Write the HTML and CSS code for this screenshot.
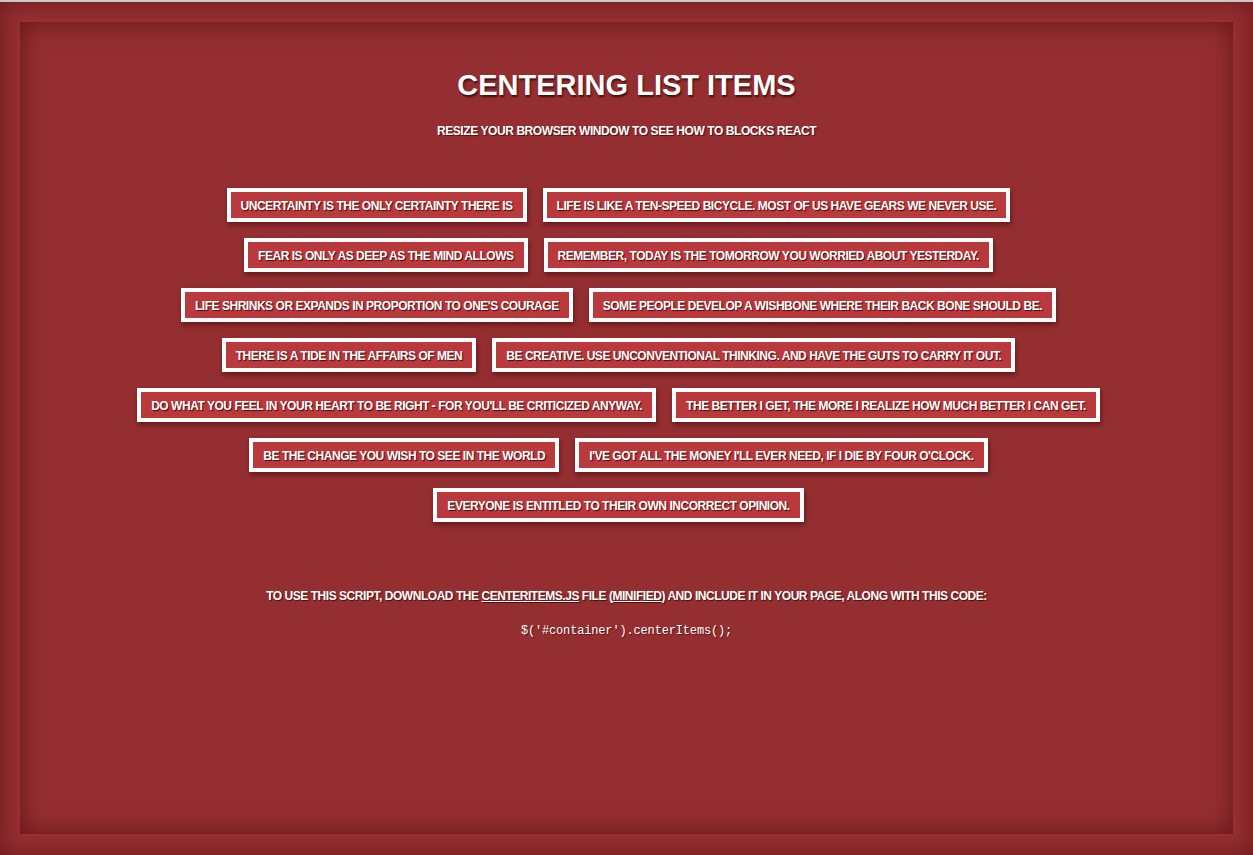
FILE: index.html
```html
<!DOCTYPE html>
<html>
<head>
<meta charset="utf-8">
<title>Centering List Items</title>
<link rel="stylesheet" href="styles.css">
</head>
<body>
<div class="page">
  <div class="container">
    <h1 class="title">CENTERING LIST ITEMS</h1>
    <p class="subtitle">RESIZE YOUR BROWSER WINDOW TO SEE HOW TO BLOCKS REACT</p>
    <ul class="list">
      <li class="row"><span class="item">UNCERTAINTY IS THE ONLY CERTAINTY THERE IS</span><span class="item">LIFE IS LIKE A TEN-SPEED BICYCLE. MOST OF US HAVE GEARS WE NEVER USE.</span></li>
      <li class="row"><span class="item">FEAR IS ONLY AS DEEP AS THE MIND ALLOWS</span><span class="item">REMEMBER, TODAY IS THE TOMORROW YOU WORRIED ABOUT YESTERDAY.</span></li>
      <li class="row"><span class="item">LIFE SHRINKS OR EXPANDS IN PROPORTION TO ONE'S COURAGE</span><span class="item">SOME PEOPLE DEVELOP A WISHBONE WHERE THEIR BACK BONE SHOULD BE.</span></li>
      <li class="row"><span class="item">THERE IS A TIDE IN THE AFFAIRS OF MEN</span><span class="item">BE CREATIVE. USE UNCONVENTIONAL THINKING. AND HAVE THE GUTS TO CARRY IT OUT.</span></li>
      <li class="row"><span class="item">DO WHAT YOU FEEL IN YOUR HEART TO BE RIGHT - FOR YOU'LL BE CRITICIZED ANYWAY.</span><span class="item">THE BETTER I GET, THE MORE I REALIZE HOW MUCH BETTER I CAN GET.</span></li>
      <li class="row"><span class="item">BE THE CHANGE YOU WISH TO SEE IN THE WORLD</span><span class="item">I'VE GOT ALL THE MONEY I'LL EVER NEED, IF I DIE BY FOUR O'CLOCK.</span></li>
      <li class="row"><span class="item">EVERYONE IS ENTITLED TO THEIR OWN INCORRECT OPINION.</span></li>
    </ul>
    <p class="note">TO USE THIS SCRIPT, DOWNLOAD THE <a href="#">CENTERITEMS.JS</a> FILE (<a href="#">MINIFIED</a>) AND INCLUDE IT IN YOUR PAGE, ALONG WITH THIS CODE:</p>
    <pre class="code">$('#container').centerItems();</pre>
  </div>
</div>
</body>
</html>
```

FILE: styles.css
```css
html, body {
  margin: 0;
  padding: 0;
}
body {
  background: #952e31;
  font-family: "Liberation Sans", Arial, sans-serif;
  color: #fff;
}
.page {
  height: 855px;
  box-sizing: border-box;
  border-top: 2px solid #c8c8ca;
  padding: 20px;
  background: #952e31;
  box-shadow: inset 0 0 24px rgba(60, 0, 0, 0.45);
}
.container {
  height: 812px;
  box-sizing: border-box;
  background: #952e31;
  box-shadow: inset 0 0 26px rgba(60, 0, 0, 0.55), 0 0 6px rgba(255, 120, 120, 0.12);
  padding-top: 46px;
  text-align: center;
}
.title {
  margin: 0;
  font-size: 29px;
  font-weight: bold;
  line-height: 34px;
  text-shadow: 1px 2px 2px rgba(40, 0, 0, 0.75);
}
.subtitle {
  margin: 21px 0 0;
  font-size: 12px;
  font-weight: bold;
  letter-spacing: -0.42px;
  line-height: 16px;
  text-shadow: 1px 1px 1px rgba(40, 0, 0, 0.7);
}
.list {
  list-style: none;
  margin: 49px 0 0;
  padding: 0;
}
.row {
  display: flex;
  justify-content: center;
  margin-bottom: 16px;
}
.item {
  display: block;
  margin-right: 16px;
  border: 4px solid #fff;
  background: #b9393d;
  padding: 1px 10px 0;
  height: 25px;
  line-height: 26px;
  font-size: 12px;
  font-weight: bold;
  letter-spacing: -0.47px;
  white-space: nowrap;
  text-shadow: 1px 1px 1px rgba(40, 0, 0, 0.8);
  box-shadow: 1px 3px 5px rgba(40, 0, 0, 0.45);
}
.note {
  margin: 66px 0 0;
  font-size: 12px;
  font-weight: bold;
  letter-spacing: -0.46px;
  line-height: 16px;
  text-shadow: 1px 1px 1px rgba(40, 0, 0, 0.7);
}
.note a {
  color: #fff;
  text-decoration: underline;
}
.code {
  margin: 19px 0 0;
  font-family: "Liberation Mono", "Courier New", monospace;
  font-size: 12px;
  letter-spacing: -0.16px;
  line-height: 16px;
  color: #fff;
  text-shadow: 1px 1px 1px rgba(40, 0, 0, 0.6);
}
```
